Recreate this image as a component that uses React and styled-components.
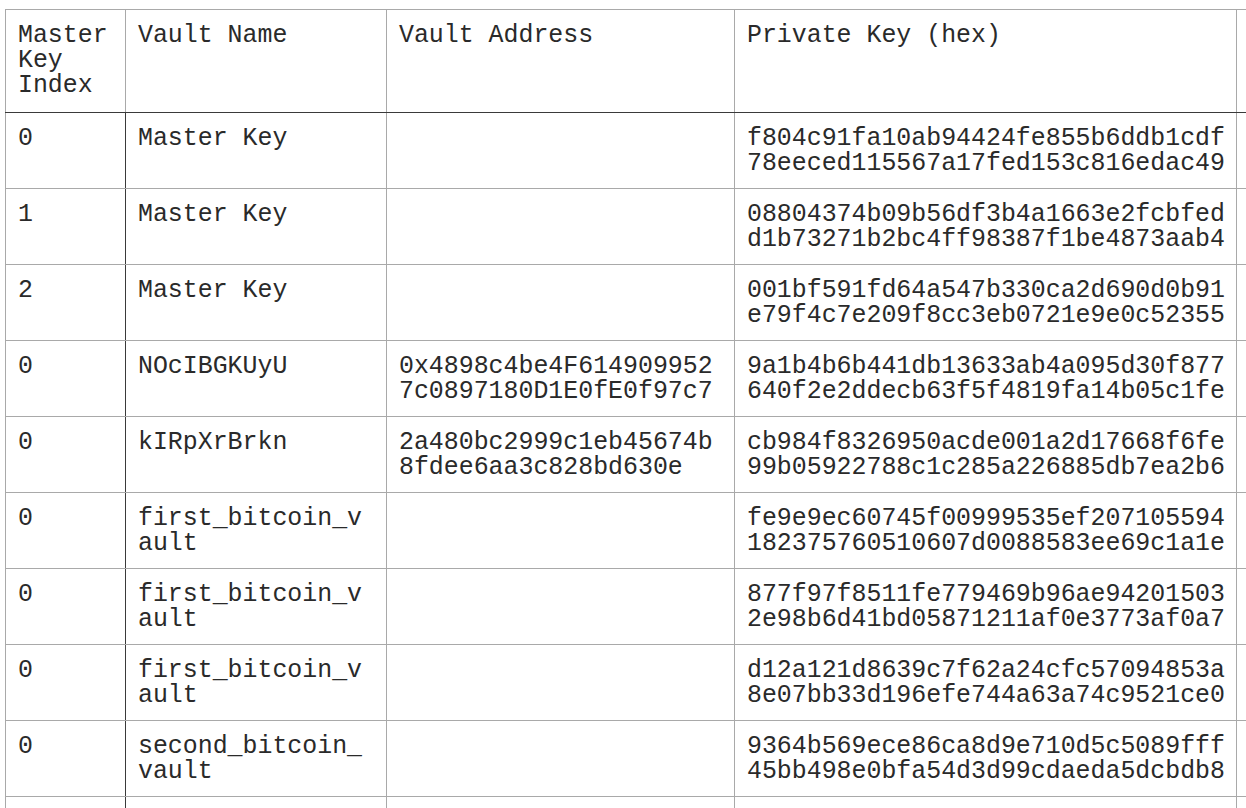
import React from 'react'
import styled, { createGlobalStyle } from 'styled-components'

const GlobalStyle = createGlobalStyle`
  html, body {
    margin: 0;
    padding: 0;
    overflow: hidden;
    background: #fff;
  }
`;

const Page = styled.div`
  padding: 9px 0 0 5px;
  width: max-content;
`;

const Table = styled.table`
  border-collapse: collapse;
  table-layout: fixed;
  width: ${p => p.$width}px;
  font-family: "Liberation Mono", "DejaVu Sans Mono", monospace;
  font-size: 24.9px;
  line-height: 25px;
  color: #2a2a2a;
`;

const HeadCell = styled.th`
  font-weight: 400;
  text-align: left;
  vertical-align: top;
  padding: 13px 12px 14px 12px;
  border: 1px solid #a9a9a9;
  border-bottom: 1px solid #3a3a3a;
  word-break: break-word;
`;

const Cell = styled.td`
  vertical-align: top;
  padding: 13px 0 12px 12px;
  height: 50px;
  border: 1px solid #a9a9a9;
  border-right-color: ${p => (p.$first ? '#3a3a3a' : '#a9a9a9')};
`;

// wraps hex strings / names at a fixed number of characters
const Wrap = styled.div`
  width: ${p => p.$chars}ch;
  word-break: break-all;
`;

const columns = [
  { key: 'index', title: 'Master Key Index', width: 120 },
  { key: 'name', title: 'Vault Name', width: 261 },
  { key: 'address', title: 'Vault Address', width: 348 },
  { key: 'key', title: 'Private Key (hex)', width: 502 },
  { key: 'extra', title: '', width: 320 },
]

const rows = [
  { index: '0', name: 'Master Key', address: '', key: 'f804c91fa10ab94424fe855b6ddb1cdf78eeced115567a17fed153c816edac49' },
  { index: '1', name: 'Master Key', address: '', key: '08804374b09b56df3b4a1663e2fcbfedd1b73271b2bc4ff98387f1be4873aab4' },
  { index: '2', name: 'Master Key', address: '', key: '001bf591fd64a547b330ca2d690d0b91e79f4c7e209f8cc3eb0721e9e0c52355' },
  { index: '0', name: 'NOcIBGKUyU', address: '0x4898c4be4F6149099527c0897180D1E0fE0f97c7', key: '9a1b4b6b441db13633ab4a095d30f877640f2e2ddecb63f5f4819fa14b05c1fe' },
  { index: '0', name: 'kIRpXrBrkn', address: '2a480bc2999c1eb45674b8fdee6aa3c828bd630e', key: 'cb984f8326950acde001a2d17668f6fe99b05922788c1c285a226885db7ea2b6' },
  { index: '0', name: 'first_bitcoin_vault', address: '', key: 'fe9e9ec60745f00999535ef207105594182375760510607d0088583ee69c1a1e' },
  { index: '0', name: 'first_bitcoin_vault', address: '', key: '877f97f8511fe779469b96ae942015032e98b6d41bd05871211af0e3773af0a7' },
  { index: '0', name: 'first_bitcoin_vault', address: '', key: 'd12a121d8639c7f62a24cfc57094853a8e07bb33d196efe744a63a74c9521ce0' },
  { index: '0', name: 'second_bitcoin_vault', address: '', key: '9364b569ece86ca8d9e710d5c5089fff45bb498e0bfa54d3d99cdaeda5dcbdb8' },
  { index: '0', name: 'second_bitcoin_vault', address: '', key: '3c1f0a9e77d2b5846e0c1fa39b57d2e880c4a6f1b93d7e2205c8ab1f64e9d3a7' },
]

const App = () => {
  const total = columns.reduce((s, c) => s + c.width, 0)
  return (
    <Page>
      <GlobalStyle />
      <Table $width={total}>
        <colgroup>
          {columns.map(c => <col key={c.key} style={{ width: c.width }} />)}
        </colgroup>
        <thead>
          <tr>
            {columns.map(c => <HeadCell key={c.key}>{c.title}</HeadCell>)}
          </tr>
        </thead>
        <tbody>
          {rows.map((r, i) => (
            <tr key={i}>
              <Cell $first><Wrap $chars={6}>{r.index}</Wrap></Cell>
              <Cell><Wrap $chars={15}>{r.name}</Wrap></Cell>
              <Cell><Wrap $chars={21}>{r.address}</Wrap></Cell>
              <Cell><Wrap $chars={32}>{r.key}</Wrap></Cell>
              <Cell></Cell>
            </tr>
          ))}
        </tbody>
      </Table>
    </Page>
  )
}

export default App
